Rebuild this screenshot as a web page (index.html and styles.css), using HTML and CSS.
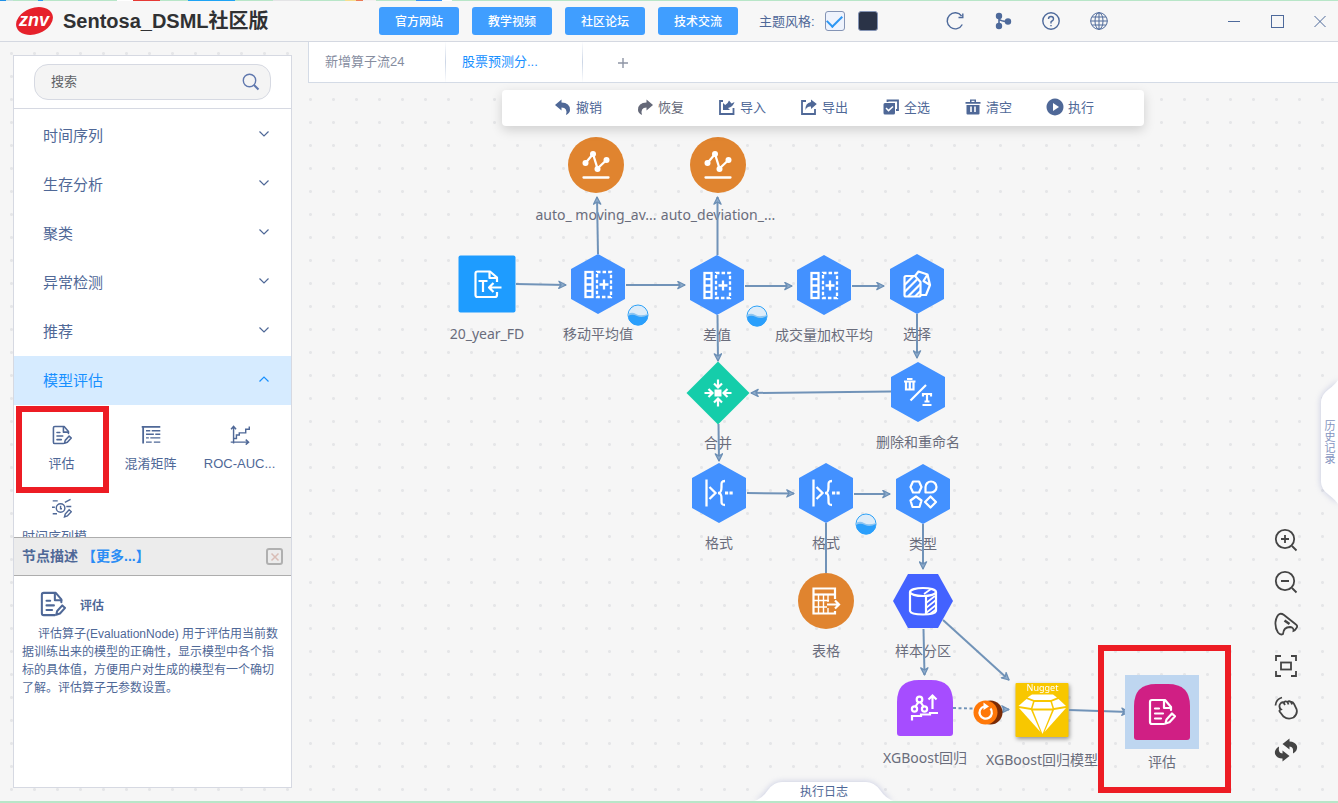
FILE: index.html
```html
<!DOCTYPE html>
<html lang="zh-CN">
<head>
<meta charset="utf-8">
<title>Sentosa_DSML社区版</title>
<link rel="stylesheet" href="styles.css">
</head>
<body>
<svg class="defs" aria-hidden="true">
  <defs>
    <marker id="arrow" viewBox="0 0 10 10" refX="9" refY="5" markerWidth="9" markerHeight="9" markerUnits="userSpaceOnUse" orient="auto">
      <path d="M1 1 L9 5 L1 9 L3.500 5 Z" fill="#8fadcc" stroke="#6c8fb5" stroke-width="1.400" stroke-linejoin="round"/>
    </marker>
    <symbol id="hex" viewBox="0 0 60 60"><path d="M30 0 L57 15 V45 L30 60 L3 45 V15 Z" fill="#4391ff"/></symbol>
    <symbol id="chart" viewBox="0 0 60 60">
      <circle cx="30" cy="30" r="28" fill="#e0842f"/>
      <g fill="none" stroke="#fff" stroke-width="2.300" stroke-linecap="round"><path d="M19.500 28 L27 19 L31.500 33.500 L40.500 25"/><path d="M17.500 42.500 H42.500"/></g>
      <g fill="#fff"><circle cx="19.500" cy="28" r="3"/><circle cx="27" cy="19" r="3"/><circle cx="31.500" cy="34" r="3"/><circle cx="40.500" cy="25" r="3"/></g>
    </symbol>
    <symbol id="derive" viewBox="0 0 60 60">
      <path d="M30 0 L57 15 V45 L30 60 L3 45 V15 Z" fill="#4391ff"/>
      <g fill="none" stroke="#fff" stroke-width="2.300"><rect x="17.500" y="18" width="7" height="25"/><path d="M17.500 24.200 H24.500 M17.500 30.500 H24.500 M17.500 36.800 H24.500"/><rect x="29" y="18" width="14" height="25" stroke-dasharray="3.500 2.070"/><path d="M36 25.500 V35.500 M31.500 30.500 H40.500"/></g>
    </symbol>
    <symbol id="format" viewBox="0 0 60 60">
      <path d="M30 0 L57 15 V45 L30 60 L3 45 V15 Z" fill="#4391ff"/>
      <g fill="none" stroke="#fff" stroke-width="2.300"><path d="M17.500 16.500 V43.500"/><path d="M20.500 24 L26.500 30 L20.500 36"/><path d="M36 18 C32 18 32.500 20 32.500 24 C32.500 28 32 30 29 30 C32 30 32.500 32 32.500 36 C32.500 40 32 42 36 42"/></g>
      <path d="M36 28.500 h3.200 v3 h-3.200z M40.500 28.500 h3.200 v3 h-3.200z" fill="#fff"/>
    </symbol>
    <symbol id="evaluate" viewBox="0 0 28 28">
      <g fill="none" stroke="currentColor" stroke-width="2.200" stroke-linejoin="round" stroke-linecap="round"><path d="M23 12 V9 L17 2 H4 Q2 2 2 4 V24 Q2 26 4 26 H16"/><path d="M16 2.500 V10 H23"/><path d="M7 10.500 H11 M7 15.500 H15 M7 20.500 H13"/><path d="M17.500 25.500 L18.500 21.500 L24 15.500 L27 18.200 L21.500 24.200 Z"/></g>
    </symbol>
    <symbol id="drop" viewBox="0 0 22 22">
      <circle cx="11" cy="11" r="10" fill="#deecf8" stroke="#2ba1f8" stroke-width="1"/>
      <path d="M1 10 Q5 7.500 9 10 T21 10 V11 A10 10 0 0 1 1 11Z" fill="#8cc5f1"/>
      <path d="M1 12 Q5 9.500 10 12 T21 11 A10 10 0 0 1 1 12Z" fill="#2a9ffc"/>
    </symbol>
    <symbol id="down" viewBox="0 0 12 12"><path d="M1.500 3.500 L6 8 L10.500 3.500" fill="none" stroke="currentColor" stroke-width="1.200"/></symbol>
  </defs>
</svg>

<div class="app">
  <div class="strip-top"></div>
  <header class="header">
    <div class="brand">
      <svg class="logo" viewBox="0 0 40 30" role="img" aria-label="znv">
        <ellipse cx="20.500" cy="15" rx="19" ry="13" transform="rotate(-20 20.500 15)" fill="#e6212b"/>
        <text x="20" y="20" text-anchor="middle" class="logo-text">znv</text>
      </svg>
      <h1 class="title">Sentosa_DSML社区版</h1>
    </div>
    <nav class="links">
      <button class="link-btn">官方网站</button>
      <button class="link-btn">教学视频</button>
      <button class="link-btn">社区论坛</button>
      <button class="link-btn">技术交流</button>
    </nav>
    <div class="theme">
      <label for="theme-light">主题风格:</label>
      <input type="checkbox" id="theme-light" class="swatch" checked>
      <input type="checkbox" class="swatch dark" aria-label="深色主题">
    </div>
    <div class="actions">
      <button class="icon-btn" aria-label="刷新"><svg viewBox="0 0 20 20"><path d="M17.300 13.500 A8 8 0 1 1 16.600 5" /><path d="M17.800 2.500 V6.500 H13.500" /></svg></button>
      <button class="icon-btn" aria-label="分支"><svg viewBox="0 0 20 20"><g fill="#4e6a9b"><circle cx="6" cy="5" r="2.500"/><circle cx="6" cy="15" r="2.500"/><circle cx="15" cy="10.500" r="2.500"/></g><path d="M6 5 V15 M6 8 Q8 10.500 15 10.500" stroke-width="1.600"/></svg></button>
      <button class="icon-btn" aria-label="帮助"><svg viewBox="0 0 20 20"><circle cx="10" cy="10" r="8.200"/><path d="M7.500 8 Q7.500 5.500 10 5.500 T12.500 8 Q12.500 9.300 11 10 T10 12 V12.500 M10 14 V15.300"/></svg></button>
      <button class="icon-btn" aria-label="语言"><svg viewBox="0 0 20 20" class="thin"><circle cx="10" cy="10" r="8.300"/><ellipse cx="10" cy="10" rx="4" ry="8.300"/><path d="M10 1.700 V18.300 M1.700 10 H18.300 M3 6 H17 M3 14 H17"/></svg></button>
    </div>
    <div class="window">
      <button class="icon-btn" aria-label="最小化"><svg viewBox="0 0 20 20" class="thin"><path d="M4 10.500 H16"/></svg></button>
      <button class="icon-btn" aria-label="最大化"><svg viewBox="0 0 20 20" class="thin"><rect x="4.500" y="4.500" width="12" height="12"/></svg></button>
      <button class="icon-btn" aria-label="关闭"><svg viewBox="0 0 20 20" class="thin"><path d="M4.500 5 L15.500 16 M15.500 5 L4.500 16"/></svg></button>
    </div>
  </header>

  <div class="body">
    <aside class="sidebar">
      <div class="panel">
        <form class="search">
          <div class="search-box">
            <input type="text" placeholder="搜索" aria-label="搜索">
            <button type="button" aria-label="搜索"><svg viewBox="0 0 18 18"><circle cx="7.500" cy="7.500" r="6.200"/><path d="M12 12 L16.500 16.500" stroke-width="2"/></svg></button>
          </div>
        </form>
        <div class="groups">
          <button class="group">时间序列<svg><use href="#down"/></svg></button>
          <button class="group">生存分析<svg><use href="#down"/></svg></button>
          <button class="group">聚类<svg><use href="#down"/></svg></button>
          <button class="group">异常检测<svg><use href="#down"/></svg></button>
          <button class="group">推荐<svg><use href="#down"/></svg></button>
          <button class="group open">模型评估<svg><use href="#down"/></svg></button>
          <div class="items">
            <button class="item marked"><svg viewBox="0 0 28 28"><use href="#evaluate"/></svg>评估</button>
            <button class="item"><svg viewBox="0 0 28 28"><g fill="none" stroke="currentColor" stroke-width="2"><path d="M1 2.500 H27 M3 2 V26" stroke-width="2.500"/><path d="M7 8 H13 M15 8 H27 M7 13 H18 M20 13 H27 M7 18 H11 M13 18 H27 M7 24 H15 M18 24 H27"/></g></svg>混淆矩阵</button>
            <button class="item"><svg viewBox="0 0 28 28"><g fill="none" stroke="currentColor" stroke-width="2"><path d="M5 26 V3 M1.500 6 L5 2 L8.500 6 M1 24 H25 M22 20.500 L26 24 L22 27.500"/><path d="M5 19 H9 V14 H13 V11 H22 V6 H27 V2"/></g></svg>ROC-AUC...</button>
            <button class="item"><svg viewBox="0 0 28 28"><g fill="none" stroke="currentColor" stroke-width="2"><circle cx="12" cy="14" r="6"/><path d="M12 11 V15 H14 M1 4 H8 M0 13 H4 M1 22 H7 M18 6 L26 2 M20 12 H27"/><path d="M17.500 26.500 L18.500 22.500 L24 16.500 L27 19.200 L21.500 25.200 Z"/></g></svg><span class="long">时间序列模</span></button>
          </div>
        </div>
        <section class="desc">
          <div class="desc-head">
            <h2>节点描述<a href="#">【更多...】</a></h2>
            <button class="close" aria-label="关闭"><svg viewBox="0 0 10 10"><path d="M1.500 1.500 L8.500 8.500 M8.500 1.500 L1.500 8.500"/></svg></button>
          </div>
          <div class="desc-body">
            <h3><svg viewBox="0 0 28 28"><use href="#evaluate"/></svg>评估</h3>
            <p>评估算子(EvaluationNode) 用于评估用当前数据训练出来的模型的正确性，显示模型中各个指标的具体值，方便用户对生成的模型有一个确切了解。评估算子无参数设置。</p>
          </div>
        </section>
      </div>
    </aside>

    <main class="workspace">
      <div class="tabs">
        <button class="tab">新增算子流24</button>
        <button class="tab active">股票预测分...</button>
        <button class="tab add" aria-label="新增"><svg viewBox="0 0 12 12"><path d="M6 1 V11 M1 6 H11"/></svg></button>
      </div>
      <div class="canvas">
        <div class="node n-auto1"><svg><use href="#chart"/></svg><span>auto_ moving_av...</span></div>
        <div class="node n-auto2"><svg><use href="#chart"/></svg><span>auto_deviation_...</span></div>
        <div class="node n-file"><svg viewBox="0 0 60 60"><rect x="1.500" y="1.500" width="57" height="57" rx="2" fill="#1e9cff"/><g fill="none" stroke="#fff" stroke-width="2.200" stroke-linejoin="round"><path d="M40 28 V23.500 L33 17.500 H20.500 Q18.500 17.500 18.500 19.500 V41 Q18.500 43 20.500 43 H38 Q40 43 40 41 V38"/><path d="M32.500 17.500 V24 H40"/><path d="M21.500 27 H30.500 M26 27 V38"/><path d="M44.500 33.500 H32 M36.500 29 L32 33.500 L36.500 38"/></g></svg><span>20_year_FD</span></div>
        <div class="node n-ma"><svg><use href="#derive"/></svg><span>移动平均值</span></div>
        <div class="node n-diff"><svg><use href="#derive"/></svg><span>差值</span></div>
        <div class="node n-vwap"><svg><use href="#derive"/></svg><span>成交量加权平均</span></div>
        <div class="node n-select"><svg viewBox="0 0 60 60"><use href="#hex"/><g fill="none" stroke="#fff" stroke-width="2.200" stroke-linejoin="round"><path d="M28 22 H19 Q17.500 22 17.500 23.500 V41 Q17.500 42.500 19 42.500 H32 Q33.500 42.500 33.500 41 V28 Z"/><path d="M17.500 31 L26.500 22 M17.500 38 L30 25.500 M21 42.500 L33.500 30 M28 42.500 L33.500 37"/><path d="M28 22 L31.500 17.500 L40.500 20.500 L43 31 L39 41 H33.500 M40.500 20.500 L36.500 27 L43 31"/></g></svg><span>选择</span></div>
        <div class="node n-merge"><svg viewBox="0 0 60 60" class="overflow"><path d="M30 -1.500 L61.500 30 L30 61.500 L-1.500 30 Z" fill="#15cdaa"/><rect x="26.500" y="26.500" width="7" height="7" fill="#fff"/><g fill="none" stroke="#fff" stroke-width="2.200"><path d="M30 16.500 V24 M26 20.500 L30 24.500 L34 20.500"/><path d="M30 43.500 V36 M26 39.500 L30 35.500 L34 39.500"/><path d="M16.500 30 H24 M20.500 26 L24.500 30 L20.500 34"/><path d="M43.500 30 H36 M39.500 26 L35.500 30 L39.500 34"/></g></svg><span>合并</span></div>
        <div class="node n-rename"><svg viewBox="0 0 60 60"><use href="#hex"/><g fill="none" stroke="#fff" stroke-width="2.200"><path d="M16 19.500 H27.500 M19 17 H24.500"/><path d="M18 20 V27.500 H25.500 V20 M21.800 20 V27"/><path d="M22.500 38.500 L38 23"/><path d="M35 34.500 V32 H43 V34.500 M39 32 V39.500 M36.500 39.500 H41.500 M34.500 43 H43.500"/></g></svg><span>删除和重命名</span></div>
        <div class="node n-fmt1"><svg><use href="#format"/></svg><span>格式</span></div>
        <div class="node n-fmt2"><svg><use href="#format"/></svg><span>格式</span></div>
        <div class="node n-type"><svg viewBox="0 0 60 60"><use href="#hex"/><g fill="none" stroke="#fff" stroke-width="2.200" stroke-linejoin="round"><path d="M20 17.500 H26 L28.500 23 L26 28.500 H20 L17.500 23 Z"/><path d="M32.500 28.500 V23 A5.500 5.500 0 1 1 38 28.500 Z"/><path d="M23 32.500 L28.500 36.500 L26.500 43 H19.500 L17.500 36.500 Z"/><path d="M37.500 32.500 L43 38 L37.500 43.500 L32 38 Z"/></g></svg><span>类型</span></div>
        <div class="node n-table"><svg viewBox="0 0 60 60"><circle cx="30" cy="30" r="28" fill="#e0842f"/><g fill="none" stroke="#fff" stroke-width="2.200"><path d="M39 28 V17.500 H17.500 V42.500 H39 V40"/><path d="M17.500 23.500 H39" /><path d="M17.500 29.500 H33 M17.500 36 H31 M22.500 23.500 V42.500 M27.500 23.500 V42.500 M32 23.500 V31 M32 37 V42" stroke-width="1.400"/><path d="M31 33.500 H43 M39 29.500 L43 33.500 L39 37.500"/></g></svg><span>表格</span></div>
        <div class="node n-split"><svg viewBox="0 0 60 60"><path d="M15 3 H45 L60 30 L45 57 H15 L0 30 Z" fill="#4362ff"/><g fill="none" stroke="#fff" stroke-width="2.200"><ellipse cx="30" cy="21" rx="13" ry="4"/><path d="M17 21 V40 Q18 43.500 30 43.500 T43 40 V21 M33 25 V43.500"/><path d="M33 32 L42 25 M33 37 L43 29 M33 42 L43 34 M37 43 L43 38.500 M31 23 L38 18" stroke-width="1.700"/></g></svg><span>样本分区</span></div>
        <div class="node n-xgb"><svg viewBox="0 0 60 60"><path d="M2 24 Q2 2 24 2 H36 Q58 2 58 24 V55 Q58 58 55 58 H5 Q2 58 2 55 Z" fill="#a64dff"/><g fill="none" stroke="#fff" stroke-width="2.200"><circle cx="24.500" cy="21.500" r="2.800"/><circle cx="19.500" cy="31" r="2.600"/><circle cx="29.500" cy="31" r="2.600"/><path d="M23.500 24 L20.500 28.500 M25.500 24 L28.500 28.500 M37.500 31 V18 M33.500 21.500 L37.500 17.500 L41.500 21.500"/><path d="M17 42.500 V38 H26 V36.500 H35 V35 H43"/></g></svg><span>XGBoost回归</span></div>
        <div class="node n-nugget"><svg viewBox="0 0 60 60" class="raised"><rect x="3.500" y="3" width="53" height="54" rx="1" fill="#f8c700"/><text x="30.500" y="11" text-anchor="middle" class="nugget-text">Nugget</text><g fill="#fff"><path d="M20 14.500 H41 L45 17.500 L39 20 H22 L15.500 17.500 Z"/><path d="M14.500 19 L21 21.500 L19 28 L6.500 26 Z"/><path d="M46.500 19 L40 21.500 L42 28 L54 26 Z"/><path d="M22.500 22 H38.500 L40.500 28.500 H20.500 Z"/><path d="M7 28 L19 30 L28.500 52 Z"/><path d="M54 28 L42 30 L32.500 52 Z"/><path d="M21 30.500 H40 L30.500 54 Z"/></g></svg><span>XGBoost回归模型</span></div>

        <svg class="edges" width="1030" height="718" aria-hidden="true">
          <g transform="translate(-308 -83)" fill="none" stroke="#7193b8" stroke-width="2">
            <path marker-end="url(#arrow)" d="M598 254 L597 197"/>
            <path marker-end="url(#arrow)" d="M717.500 255 V197"/>
            <path marker-end="url(#arrow)" d="M516 284 L566 285"/>
            <path marker-end="url(#arrow)" d="M626 285 H685"/>
            <path marker-end="url(#arrow)" d="M745 286 H792"/>
            <path marker-end="url(#arrow)" d="M852 286 H884"/>
            <path marker-end="url(#arrow)" d="M717.500 315 L718 361"/>
            <path marker-end="url(#arrow)" d="M917 314 V358"/>
            <path marker-end="url(#arrow)" d="M891 391.500 L751 393"/>
            <path marker-end="url(#arrow)" d="M718.500 424 L719 461"/>
            <path marker-end="url(#arrow)" d="M747 493 L794 493.500"/>
            <path marker-end="url(#arrow)" d="M854 494 H890"/>
            <path d="M826 523 V573"/>
            <path marker-end="url(#arrow)" d="M923 524 V569"/>
            <path marker-end="url(#arrow)" d="M923.500 629 L924.500 675"/>
            <path marker-end="url(#arrow)" d="M943 620 L1009 680"/>
            <path marker-end="url(#arrow)" d="M953 708 L1009 709.500" stroke-dasharray="3 2.500"/>
            <path marker-end="url(#arrow)" d="M1069 710 L1129 712"/>
          </g>
        </svg>
        <div class="node n-eval selected"><svg viewBox="0 0 60 60"><path d="M2 24 Q2 2 24 2 H36 Q58 2 58 24 V55 Q58 58 55 58 H5 Q2 58 2 55 Z" fill="#d01f84"/><use href="#evaluate" x="16" y="16" width="28" height="28" color="#fff"/></svg><span>评估</span></div>
        <svg class="drop d-ma"><use href="#drop"/></svg>
        <svg class="drop d-diff"><use href="#drop"/></svg>
        <svg class="drop d-fmt"><use href="#drop"/></svg>
        <svg class="link-state" viewBox="0 0 30 26"><circle cx="17.500" cy="12.500" r="12" fill="#7a2b06"/><circle cx="12.500" cy="12.500" r="12" fill="#ff7809"/><path d="M17.500 8.500 A6.200 6.200 0 1 1 11 6.500" fill="none" stroke="#fff" stroke-width="2.200"/><path d="M10.500 2.500 L16 6.500 L10.500 10 Z" fill="#fff"/></svg>
        <div class="frame"></div>

        <div class="toolbar">
          <button><svg viewBox="0 0 16 16"><path d="M0 6 L6.500 0.500 V3.500 Q15 3.500 15 11 Q15 14 11 16 Q13 8.500 6.500 8.500 V11.500 Z"/></svg>撤销</button>
          <button class="muted"><svg viewBox="0 0 16 16"><path d="M16 6 L9.500 0.500 V3.500 Q1 3.500 1 11 Q1 14 5 16 Q3 8.500 9.500 8.500 V11.500 Z"/></svg>恢复</button>
          <button><svg viewBox="0 0 16 16"><path d="M4 2 H1 V15 H14.500 V9" fill="none" stroke="currentColor" stroke-width="1.800"/><path d="M4 11 V4 L6.200 6 Q9 4.500 10 1.500 L12.500 4.500 L15.500 3 Q14 8 9 9 L11 11 Z"/></svg>导入</button>
          <button><svg viewBox="0 0 16 16"><path d="M5 2 H1 V15 H14 V10" fill="none" stroke="currentColor" stroke-width="1.800"/><path d="M15.800 5 L10 0.500 V3 Q4 4 4.500 11 Q6 7 10 7.500 V10 Z"/></svg>导出</button>
          <button><svg viewBox="0 0 16 16"><path d="M4.500 3 V1.500 H15 V11 H13" fill="none" stroke="currentColor" stroke-width="1.800"/><path fill-rule="evenodd" d="M2 4 H12 V14 Q12 15.500 10.500 15.500 H2 Q0.500 15.500 0.500 14 V5.500 Q0.500 4 2 4 Z M2.500 9.500 L5.500 12.800 L10.500 8 L9.500 7 L5.500 10.500 L3.500 8.500 Z"/></svg>全选</button>
          <button><svg viewBox="0 0 16 16"><path fill-rule="evenodd" d="M5 0.500 H11 V3 H15.500 V4.800 H0.500 V3 H5 Z M6.500 1.800 V3 H9.500 V1.800 Z M1.500 6 H14.500 V14.500 Q14.500 15.500 13.500 15.500 H2.500 Q1.500 15.500 1.500 14.500 Z M5.200 7.500 V13 H6.800 V7.500 Z M9.200 7.500 V13 H10.800 V7.500 Z"/></svg>清空</button>
          <button><svg viewBox="0 0 16 16" class="overflow"><path fill-rule="evenodd" d="M8 -0.500 A8.500 8.500 0 1 1 7.990 -0.500 Z M6 4 V12 L12 8 Z"/></svg>执行</button>
        </div>

        <div class="tools">
          <button aria-label="放大"><svg viewBox="0 0 24 24"><circle cx="11" cy="11" r="9.200"/><path d="M18 18 L22.500 22.500 M7 11 H15 M11 7 V15"/></svg></button>
          <button aria-label="缩小"><svg viewBox="0 0 24 24"><circle cx="11" cy="11" r="9.200"/><path d="M18 18 L22.500 22.500 M7 11 H15"/></svg></button>
          <button aria-label="恢复视角"><svg viewBox="0 0 24 24"><path d="M6 1.800 Q8 1.500 10 3 L22 12.500 Q24 14 22.500 16 Q21 18.500 19.500 19 Q20 15.500 16 15 Q9.500 15 9 22 Q6.500 23.500 4 20.500 Q1 16 1.500 10 Q2.500 3 6 1.800 Z"/><path d="M10.500 8.500 L15.500 12" stroke-width="2.500"/></svg></button>
          <button aria-label="适应画布"><svg viewBox="0 0 24 24"><path d="M2 7 V2 H7 M17 2 H22 V7 M22 17 V22 H17 M7 22 H2 V17"/><rect x="7" y="8.500" width="10" height="7"/></svg></button>
          <button aria-label="拖动"><svg viewBox="0 0 24 24"><path d="M1.500 9.500 Q2 3 8 1.500" /><path d="M6 8 Q8 5.500 10 6.500 Q11 4.500 13.500 6 Q15 4.500 17 6 Q19 5.500 20 8 L22.500 13 Q24 18 19.500 21.500 Q14 24 9.500 20.500 L6 16 Q4.500 14.500 7 13.500 Q4.500 11.500 6 8 M9.500 6.500 L11 9 M13.500 6 L14.500 8.500 M17 6 L18 8.500"/></svg></button>
          <button aria-label="刷新画布"><svg viewBox="0 0 24 24" class="solid"><path d="M15.500 0.500 L8.500 6 L15.500 11.500 V8.500 Q20 8.500 19 15.500 Q24 12.500 23 8 Q21 3.500 15.500 3.500 Z M8.500 23.500 L15.500 18 L8.500 12.500 V15.500 Q4 15.500 5 8.500 Q0 11.500 1 16 Q3 20.500 8.500 20.500 Z"/></svg></button>
        </div>

        <button class="history"><svg viewBox="0 0 18 128" aria-hidden="true"><path d="M19 0 Q17 5 9 11 Q1 17 1 24 V104 Q1 111 9 117 Q17 123 19 128 Z" fill="#fff"/></svg><span>历史记录</span></button>
        <button class="log"><svg viewBox="0 0 140 20" aria-hidden="true"><path d="M0 20 Q8 18 14 9 Q20 1 28 1 H112 Q120 1 126 9 Q132 18 140 20 Z" fill="#fff"/></svg><span>执行日志</span></button>
      </div>
    </main>
  </div>
  <div class="strip-bottom"></div>
</div>
</body>
</html>
```

FILE: styles.css
```css
* { box-sizing: border-box; }

body {
  margin: 0;
  font-family: "Liberation Sans", "Noto Sans CJK SC", sans-serif;
  font-size: 13px;
  color: #4f6897;
  background: #f6f6f6;
}

button {
  margin: 0;
  padding: 0;
  border: 0;
  background: none;
  font: inherit;
  color: inherit;
  cursor: pointer;
}

h1, h2, h3, p { margin: 0; }

svg { display: block; }

.defs { position: absolute; width: 0; height: 0; }
.overflow { overflow: visible; }

.app {
  display: grid;
  grid-template-rows: 1px 41px minmax(0, 1fr) 2px;
  height: 100vh;
  overflow: hidden;
}

.strip-top {
  background: linear-gradient(90deg, #1e90e8 0 6px, #c9dfe0 6px 13px, #b8e6c8 13px 38px, #2b9cf2 38px 43px, #b8e6c8 43px 117px, #fff 117px 133px, #e63a35 133px 160px, #b8e6c8 160px 188px, #1ea4f5 188px 235px, #b8e6c8 235px 273px, #e4e4e6 273px 300px, #b8e6c8 300px 345px, #f7dd8d 345px 356px, #ec7a55 356px 363px, #f3f0f0 363px 376px, #b8e6c8 376px 416px, #3594f5 416px 442px, #fff 442px 452px, #b8e6c8 452px);
}
.strip-bottom { background: #b8e6c8; }

/* Header */
.header {
  display: flex;
  align-items: center;
  background: #f7f7f7;
  border-bottom: 1px solid #d4d8e1;
}
.brand {
  display: flex;
  align-items: center;
  gap: 9px;
  width: 379px;
  padding-left: 14px;
}
.logo { width: 40px; height: 30px; }
.logo-text { font: italic bold 18px "Liberation Sans", sans-serif; fill: #fff; }
.title {
  font: bold 20px/28px "Liberation Sans", "Noto Sans CJK SC", sans-serif;
  color: #303133;
}
.links { display: flex; gap: 13px; }
.link-btn {
  width: 80px;
  height: 28px;
  padding-bottom: 2px;
  border-radius: 3px;
  background: #409eff;
  color: #fff;
  font-size: 12px;
  font-weight: 500;
}
.theme {
  display: flex;
  align-items: center;
  gap: 13px;
  margin-left: 21px;
}
.theme label { margin-right: -3px; padding-bottom: 2px; }
.swatch {
  appearance: none;
  display: grid;
  place-items: center;
  width: 20px;
  height: 20px;
  margin: 0;
  border: 1px solid #8494b5;
  border-radius: 3px;
  background: #eef3fd;
}
.swatch:checked::after {
  content: "";
  width: 13px;
  height: 7px;
  margin-top: -4px;
  border: solid #2d97f3;
  border-width: 0 0 2px 2px;
  transform: rotate(-45deg);
}
.swatch.dark { background: #2a3347; }
.actions {
  display: flex;
  gap: 28px;
  margin-left: 67px;
}
.window {
  display: flex;
  gap: 23px;
  margin-left: auto;
  padding-right: 8px;
}
.icon-btn svg {
  width: 20px;
  height: 20px;
  fill: none;
  stroke: #4e6a9b;
  stroke-width: 1.4;
}
.icon-btn svg.thin { stroke-width: 1; }

/* Body */
.body {
  display: grid;
  grid-template-columns: 308px minmax(0, 1fr);
  background: radial-gradient(circle at center, #e5e6e8 1px, transparent 2px) 0 0 / 23px 23px;
  min-height: 0;
}
.sidebar { padding: 13px 16px 13px 13px; min-height: 0; }
.panel {
  display: flex;
  flex-direction: column;
  height: 100%;
  border: 1px solid #d6d9e2;
  background: #fff;
}
.search {
  padding: 8px 20px;
  border-bottom: 1px solid #d6d9e2;
}
.search-box {
  display: flex;
  align-items: center;
  height: 36px;
  padding: 0 10px 0 16px;
  border: 1px solid #d6d9e2;
  border-radius: 14px;
  background: #f4f4f4;
}
.search-box input {
  flex: 1;
  min-width: 0;
  padding: 0 0 2px;
  border: 0;
  outline: 0;
  background: none;
  font: inherit;
}
.search-box input::placeholder { color: #606266; opacity: 1; }
.search-box svg {
  width: 18px;
  height: 18px;
  fill: none;
  stroke: #6078ae;
  stroke-width: 1.4;
}

.groups {
  flex: 1;
  min-height: 0;
  overflow: hidden;
  padding-top: 2px;
}
.group {
  display: flex;
  align-items: center;
  justify-content: space-between;
  width: 100%;
  height: 49px;
  padding: 0 21px 3px 29px;
  font-size: 15px;
}
.group svg { width: 12px; height: 12px; }
.group.open { background: #d6ebff; color: #1890ff; }
.group.open svg { transform: rotate(180deg); }

.items {
  display: grid;
  grid-template-columns: repeat(3, 89px);
  padding: 3px;
}
.item {
  position: relative;
  display: flex;
  flex-direction: column;
  align-items: center;
  gap: 9px;
  height: 73px;
  padding-top: 17px;
  line-height: 20px;
  white-space: nowrap;
}
.item svg { width: 20px; height: 20px; }
.item .long { align-self: flex-start; padding-left: 5px; }
.marked::after {
  content: "";
  position: absolute;
  inset: -2px -3px -12px -1px;
  border: 6px solid #ed1c24;
}

.desc { flex: 0 0 250px; }
.desc-head {
  display: flex;
  align-items: center;
  justify-content: space-between;
  height: 39px;
  padding: 0 8px;
  border: solid #adadad;
  border-width: 1px 0;
  background: #ececec;
}
.desc-head h2 { padding-bottom: 2px; font-size: 14px; line-height: 20px; }
.desc-head a { color: #2a8cf5; text-decoration: none; margin-left: 4px; }
.close {
  display: grid;
  place-items: center;
  width: 17px;
  height: 17px;
  border: 2px solid #b0b0b0;
  border-radius: 3px;
}
.close svg { width: 10px; height: 10px; stroke: #d9bdb6; stroke-width: 1.5; }
.desc-body { padding: 15px 9px 0 8px; }
.desc-body h3 {
  display: flex;
  align-items: center;
  gap: 14px;
  padding-left: 18px;
  font-size: 12px;
}
.desc-body h3 svg { width: 26px; height: 26px; }
.desc-body p {
  margin-top: 8px;
  font-size: 12px;
  line-height: 18px;
  text-indent: 16px;
}

/* Workspace */
.workspace {
  display: flex;
  flex-direction: column;
  min-height: 0;
}
.tabs {
  display: flex;
  height: 41px;
  background: #fff;
  border: solid #d4dbe6;
  border-width: 0 0 1px 1px;
}
.tab {
  width: 137px;
  padding: 0 16px 3px;
  text-align: left;
  color: #868d9f;
  border-right: 1px solid;
  border-image: linear-gradient(#fff, #ccd6e6 50%, #fff) 1;
}
.tab.active { color: #1890ff; }
.tab.add { width: 80px; padding: 2px 34px 0; border: 0; }
.tab.add svg { width: 12px; height: 12px; stroke: #8e95a5; stroke-width: 1.4; }

.canvas { position: relative; flex: 1; overflow: hidden; }

.node {
  position: absolute;
  display: flex;
  flex-direction: column;
  align-items: center;
  gap: 10px;
  width: 120px;
  font: 14px/20px "Noto Sans", "Noto Sans CJK SC", sans-serif;
  color: #6a6d7c;
  white-space: nowrap;
}
.node > svg { width: 60px; height: 60px; }
.n-auto1 { left: 228px; top: 52px; }
.n-auto2 { left: 350px; top: 52px; }
.n-file { left: 119px; top: 171px; }
.n-ma { left: 230px; top: 171px; }
.n-diff { left: 349px; top: 172px; }
.n-vwap { left: 456px; top: 172px; }
.n-select { left: 549px; top: 171px; }
.n-merge { left: 350px; top: 280px; }
.n-rename { left: 550px; top: 279px; }
.n-fmt1 { left: 351px; top: 380px; }
.n-fmt2 { left: 458px; top: 380px; }
.n-type { left: 555px; top: 381px; }
.n-table { left: 458px; top: 488px; }
.n-split { left: 555px; top: 488px; }
.n-xgb { left: 557px; top: 595px; }
.n-nugget { left: 674px; top: 597px; }
.n-eval { left: 794px; top: 599px; }
.selected > svg { outline: 7px solid #bed6f0; background: #bed6f0; }
.raised { filter: drop-shadow(1px 2px 2px rgba(0, 0, 0, 0.4)); }
.nugget-text { font: 9px "Noto Sans", sans-serif; fill: #fff; }

.edges { position: absolute; left: 0; top: 0; pointer-events: none; }
.drop { position: absolute; width: 22px; height: 22px; }
.d-ma { left: 319px; top: 221px; }
.d-diff { left: 438px; top: 222px; }
.d-fmt { left: 547px; top: 430px; }
.link-state { position: absolute; left: 665px; top: 617px; width: 30px; height: 26px; }
.frame {
  position: absolute;
  left: 790px;
  top: 562px;
  width: 133px;
  height: 148px;
  border: 6px solid #ed1c24;
}

.toolbar {
  position: absolute;
  left: 50%;
  top: 7px;
  transform: translateX(-50%);
  display: flex;
  align-items: center;
  justify-content: center;
  gap: 34px;
  width: 642px;
  height: 36px;
  padding: 0 0 3px 4px;
  border-radius: 4px;
  background: #fff;
  box-shadow: 0 4px 12px rgba(0, 0, 0, 0.16);
}
.toolbar button {
  display: flex;
  align-items: center;
  gap: 5px;
  width: 48px;
  white-space: nowrap;
}
.toolbar svg { flex: none; width: 16px; height: 16px; fill: currentColor; }
.toolbar .muted { color: #646878; }

.tools {
  position: absolute;
  right: 40px;
  bottom: 39px;
  display: flex;
  flex-direction: column;
  gap: 18px;
}
.tools svg {
  width: 24px;
  height: 24px;
  fill: none;
  stroke: #444;
  stroke-width: 1.8;
}
.tools .solid { fill: #444; stroke: none; }

.history {
  position: absolute;
  right: 0;
  top: 295px;
  width: 18px;
  height: 128px;
  color: #8494c0;
}
.history svg, .log svg {
  position: absolute;
  inset: 0;
  width: 100%;
  height: 100%;
  filter: drop-shadow(0 0 3px rgba(120, 130, 190, 0.4));
}
.history span {
  position: relative;
  display: block;
  width: 16px;
  margin: auto;
  font-size: 11px;
  line-height: 16px;
  writing-mode: vertical-rl;
}
.log {
  position: absolute;
  left: 50%;
  bottom: 0;
  width: 140px;
  height: 20px;
  margin-left: -69px;
  padding-bottom: 1px;
  font-size: 12px;
}
.log span { position: relative; }
```
